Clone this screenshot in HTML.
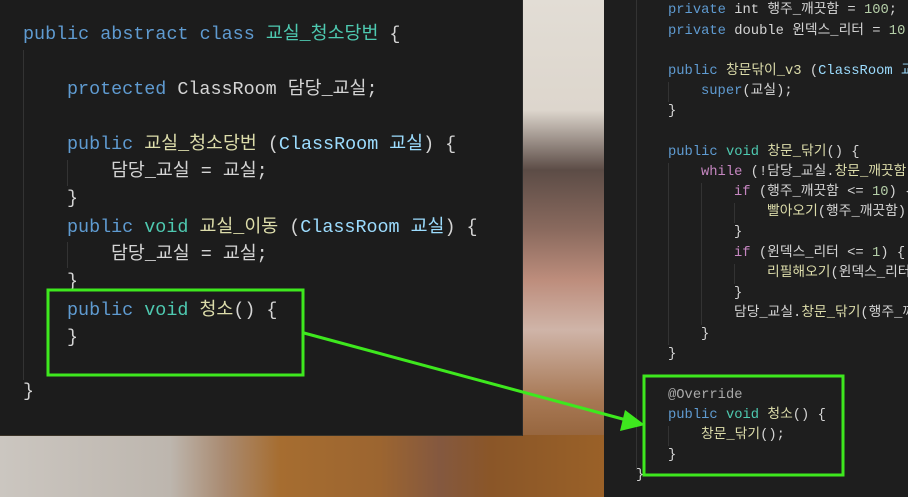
<!DOCTYPE html>
<html><head><meta charset="utf-8"><style>
html,body{margin:0;padding:0;width:908px;height:497px;overflow:hidden;background:#1b1b1b}
#bg{position:absolute;left:0;top:0;width:908px;height:497px;
background:linear-gradient(180deg,#e2ddd5 0px,#ddd6cd 110px,#5c4c46 170px,#8a6a5e 230px,#bd8d7c 280px,#cfb4a8 330px,#a77854 400px,#8c5a30 460px,#9a6430 497px);}
#bot{position:absolute;left:0;top:435px;width:604px;height:62px;
background:linear-gradient(90deg,#cbc6c0 0px,#bdb6ae 170px,#a98a70 225px,#a66d30 280px,#9c6530 380px,#84583f 440px,#8a5628 490px,#9a6128 604px);}
.panel{position:absolute;background:#1c1c1c}
.l{position:absolute;white-space:pre;font-family:"Liberation Mono","Noto Sans CJK KR",monospace;color:#d4d4d4}
.L .l{font-size:18.4px;line-height:28px;height:28px}
.R .l{font-size:13.8px;line-height:20px;height:20px}
.k{color:#5f9bd1}.t{color:#4ec9b0}.f{color:#dcdcaa}.v{color:#9cdcfe}.p{color:#c586c0}.n{color:#b5cea8}.g{color:#aaa}
.guide{position:absolute;width:1px;background:#333}
</style></head><body>
<div id="bg"></div><div id="bot"></div>
<div class="panel L" style="left:0;top:0;width:522px;height:435px;border-bottom:1px solid #3a3328;border-right:1px solid #2a2a2a">
<div class="guide" style="left:23px;top:50px;height:330px"></div>
<div class="guide" style="left:67px;top:160px;height:26px"></div>
<div class="guide" style="left:67px;top:242px;height:26px"></div>
<div class="l" style="left:23px;top:21px"><span class="k">public abstract class</span> <span class="t">교실_청소당번</span> {</div>
<div class="l" style="left:67px;top:76px"><span class="k">protected</span> ClassRoom 담당_교실;</div>
<div class="l" style="left:67px;top:131px"><span class="k">public</span> <span class="f">교실_청소당번</span> (<span class="v">ClassRoom 교실</span>) {</div>
<div class="l" style="left:111px;top:158px">담당_교실 = 교실;</div>
<div class="l" style="left:67px;top:185px">}</div>
<div class="l" style="left:67px;top:214px"><span class="k">public</span> <span class="t">void</span> <span class="f">교실_이동</span> (<span class="v">ClassRoom 교실</span>) {</div>
<div class="l" style="left:111px;top:241px">담당_교실 = 교실;</div>
<div class="l" style="left:67px;top:268px">}</div>
<div class="l" style="left:67px;top:297px"><span class="k">public</span> <span class="t">void</span> <span class="f">청소</span>() {</div>
<div class="l" style="left:67px;top:324px">}</div>
<div class="l" style="left:23px;top:378px">}</div>
</div>
<div class="panel R" style="left:604px;top:0;width:304px;height:497px;background:#1e1e1e">
<div class="guide" style="left:32px;top:0;height:470px"></div>
<div class="guide" style="left:64px;top:82px;height:20px"></div>
<div class="guide" style="left:64px;top:163px;height:182px"></div>
<div class="guide" style="left:97px;top:183px;height:142px"></div>
<div class="guide" style="left:130px;top:203px;height:20px"></div>
<div class="guide" style="left:130px;top:264px;height:20px"></div>
<div class="guide" style="left:64px;top:426px;height:20px"></div>
<div class="l" style="left:64px;top:1px"><span class="k">private</span> int 행주_깨끗함 = <span class="n">100</span>;</div>
<div class="l" style="left:64px;top:22px"><span class="k">private</span> double 윈덱스_리터 = <span class="n">10.0</span></div>
<div class="l" style="left:64px;top:62px"><span class="k">public</span> <span class="f">창문닦이_v3</span> (<span class="v">ClassRoom 교실</span></div>
<div class="l" style="left:97px;top:82px"><span class="k">super</span>(교실);</div>
<div class="l" style="left:64px;top:102px">}</div>
<div class="l" style="left:64px;top:143px"><span class="k">public</span> <span class="t">void</span> <span class="f">창문_닦기</span>() {</div>
<div class="l" style="left:97px;top:163px"><span class="p">while</span> (!담당_교실.<span class="f">창문_깨끗함</span> (</div>
<div class="l" style="left:130px;top:183px"><span class="p">if</span> (행주_깨끗함 &lt;= <span class="n">10</span>) {</div>
<div class="l" style="left:163px;top:203px"><span class="f">빨아오기</span>(행주_깨끗함);</div>
<div class="l" style="left:130px;top:223px">}</div>
<div class="l" style="left:130px;top:244px"><span class="p">if</span> (윈덱스_리터 &lt;= <span class="n">1</span>) {</div>
<div class="l" style="left:163px;top:264px"><span class="f">리필해오기</span>(윈덱스_리터)</div>
<div class="l" style="left:130px;top:284px">}</div>
<div class="l" style="left:130px;top:304px">담당_교실.<span class="f">창문_닦기</span>(행주_깨끗</div>
<div class="l" style="left:97px;top:325px">}</div>
<div class="l" style="left:64px;top:345px">}</div>
<div class="l" style="left:64px;top:386px"><span class="g">@Override</span></div>
<div class="l" style="left:64px;top:406px"><span class="k">public</span> <span class="t">void</span> <span class="f">청소</span>() {</div>
<div class="l" style="left:97px;top:426px"><span class="f">창문_닦기</span>();</div>
<div class="l" style="left:64px;top:446px">}</div>
<div class="l" style="left:32px;top:466px">}</div>
</div>
<svg width="908" height="497" style="position:absolute;left:0;top:0">
<rect x="48" y="290" width="255" height="85" fill="none" stroke="#3ee81e" stroke-width="3"/>
<rect x="644" y="376" width="199" height="99" fill="none" stroke="#3ee81e" stroke-width="3"/>
<line x1="304" y1="333" x2="630" y2="421" stroke="#3ee81e" stroke-width="3"/>
<polygon points="645,425 625,410 620,431" fill="#3ee81e"/>
</svg>
</body></html>
